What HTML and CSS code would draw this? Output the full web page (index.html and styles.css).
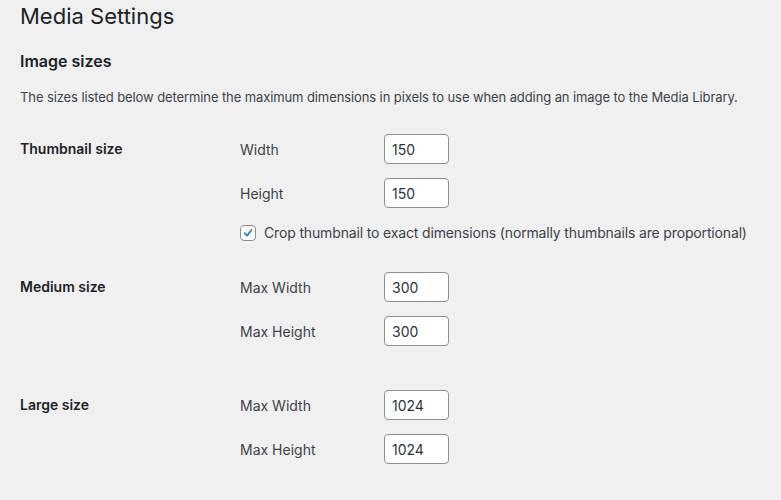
FILE: index.html
```html
<!DOCTYPE html>
<html>
<head>
    <title>Media Settings</title>
    <link rel="stylesheet" href="styles.css">
</head>
<body>
    <div class="wrap">
        <h1>Media Settings</h1>
        <h2>Image sizes</h2>
        <p class="intro">The sizes listed below determine the maximum dimensions in pixels to use when adding an image to the Media Library.</p>

        <div class="size-group thumb">
            <div class="group-label">Thumbnail size</div>
            <div class="fields">
                <div class="field">
                    <label>Width</label>
                    <input type="text" value="150">
                </div>
                <div class="field">
                    <label>Height</label>
                    <input type="text" value="150">
                </div>
                <div class="check-row">
                    <span class="checkbox">
                        <svg viewBox="0 0 16 16" width="16" height="16"><path d="M4.2 8.2 L7 11 L12 4.6" fill="none" stroke="#3582c4" stroke-width="2.2" stroke-linecap="round" stroke-linejoin="round"/></svg>
                    </span>
                    <span class="check-text">Crop thumbnail to exact dimensions (normally thumbnails are proportional)</span>
                </div>
            </div>
        </div>

        <div class="size-group medium">
            <div class="group-label">Medium size</div>
            <div class="fields">
                <div class="field">
                    <label>Max Width</label>
                    <input type="text" value="300">
                </div>
                <div class="field">
                    <label>Max Height</label>
                    <input type="text" value="300">
                </div>
            </div>
        </div>

        <div class="size-group large">
            <div class="group-label">Large size</div>
            <div class="fields">
                <div class="field">
                    <label>Max Width</label>
                    <input type="text" value="1024">
                </div>
                <div class="field">
                    <label>Max Height</label>
                    <input type="text" value="1024">
                </div>
            </div>
        </div>
    </div>
</body>
</html>
```

FILE: styles.css
```css
* {
    margin: 0;
    padding: 0;
    box-sizing: border-box;
}

body {
    background: #f0f0f1;
    color: #3c434a;
    font-family: Inter, "Liberation Sans", sans-serif;
    font-size: 14px;
}

.wrap {
    padding: 4px 20px 0 20px;
}

h1 {
    font-size: 22px;
    font-weight: 400;
    color: #1d2327;
    line-height: 24px;
}

h2 {
    font-size: 16px;
    font-weight: 600;
    color: #1d2327;
    margin-top: 23px;
    line-height: 20px;
}

.intro {
    font-size: 13px;
    line-height: 16px;
    margin-top: 18px;
    color: #3c434a;
    letter-spacing: -0.1px;
}

.size-group {
    display: flex;
}

.group-label {
    width: 220px;
    font-weight: 600;
    color: #1d2327;
    padding-top: 6px;
}

.fields {
    display: flex;
    flex-direction: column;
    gap: 14px;
}

.field {
    display: flex;
    align-items: center;
    height: 30px;
}

.field label {
    width: 144px;
}

.field input {
    width: 65px;
    height: 30px;
    border: 1px solid #8c8f94;
    border-radius: 4px;
    background: #fff;
    padding: 0 7px;
    font-family: inherit;
    font-size: 14px;
    color: #2c3338;
    outline: none;
}

.check-row {
    display: flex;
    align-items: center;
    gap: 8px;
    margin-top: 2px;
}

.check-text {
    letter-spacing: -0.15px;
}

.checkbox {
    width: 16px;
    height: 16px;
    border: 1px solid #8c8f94;
    border-radius: 4px;
    background: #fff;
    display: flex;
    align-items: center;
    justify-content: center;
}

.checkbox svg {
    width: 14px;
    height: 14px;
}

.thumb {
    margin-top: 29px;
}

.medium {
    margin-top: 31px;
}

.large {
    margin-top: 44px;
}
```
